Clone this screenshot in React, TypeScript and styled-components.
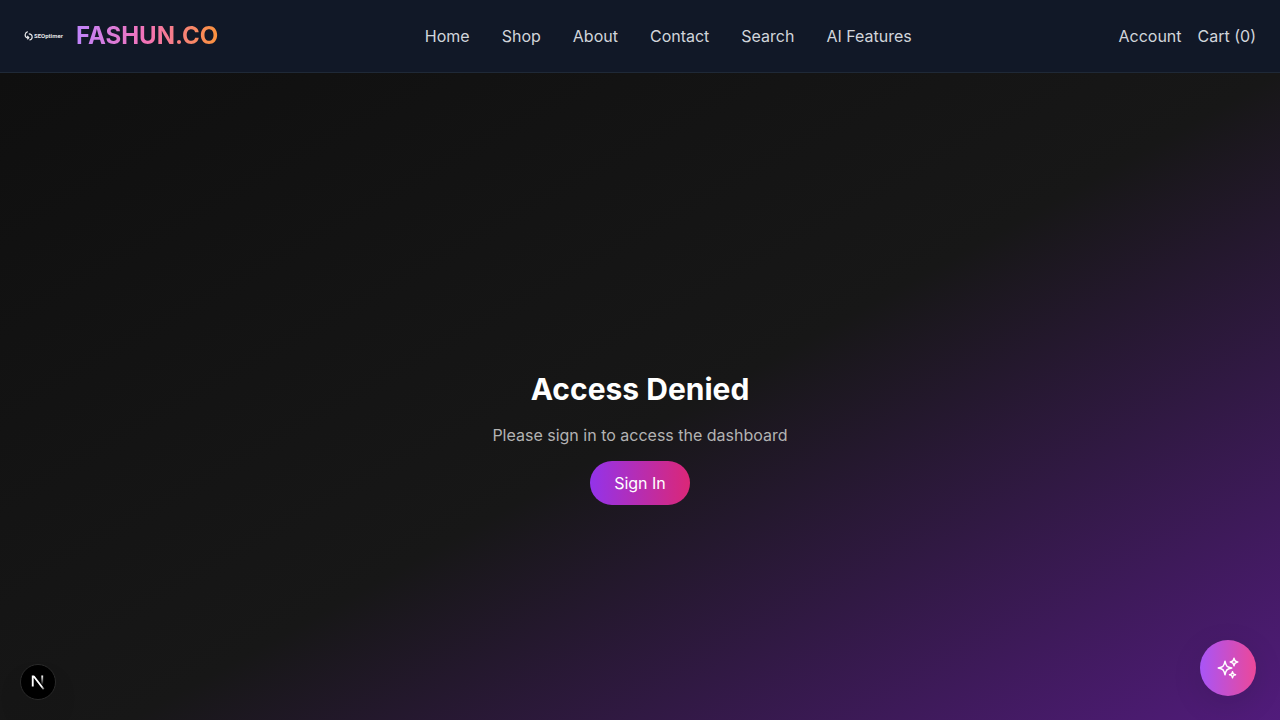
import React from "react";
import styled, { createGlobalStyle } from "styled-components";
import { HiOutlineSparkles } from "react-icons/hi2";

const GlobalStyle = createGlobalStyle`
  *, *::before, *::after { box-sizing: border-box; }
  body {
    margin: 0;
    background: #171717;
    color: #ffffff;
    font-family: Inter, "Liberation Sans", sans-serif;
    font-size: 16px;
    line-height: 24px;
  }
  a { color: inherit; text-decoration: none; }
`;

const Header = styled.header`
  display: flex;
  align-items: center;
  justify-content: space-between;
  padding: 16px 24px;
  background: #111827;
  border-bottom: 1px solid #1f2937;
`;

const Brand = styled.a`
  display: flex;
  align-items: center;
  gap: 12px;
`;

const BrandLogo = styled.svg`
  display: block;
  width: 40px;
  height: 40px;
`;

const BrandName = styled.span`
  font-size: 24px;
  line-height: 32px;
  font-weight: 700;
  color: transparent;
  background: linear-gradient(to right, #c084fc, #f472b6, #fb923c);
  -webkit-background-clip: text;
  background-clip: text;
`;

const LinkRow = styled.nav<{ $gap: number }>`
  display: flex;
  align-items: center;
  gap: ${({ $gap }) => $gap}px;
`;

const NavLink = styled.a`
  color: #d1d5db;
  &:hover { color: #ffffff; }
`;

const Main = styled.main`
  display: flex;
  align-items: center;
  justify-content: center;
  min-height: 100vh;
  background: linear-gradient(to bottom right, #0f0f0f, #171717, #581c87);
`;

const Notice = styled.section`
  text-align: center;
`;

const Title = styled.h1`
  margin: 0 0 16px;
  font-size: 30px;
  line-height: 36px;
  font-weight: 700;
`;

const Message = styled.p`
  margin: 0 0 24px;
  color: #b3b3b3;
`;

const SignInLink = styled.a`
  padding: 12px 24px;
  border-radius: 9999px;
  background: linear-gradient(to right, #9333ea, #db2777);
`;

const AssistantButton = styled.button`
  position: fixed;
  right: 24px;
  bottom: 24px;
  display: flex;
  align-items: center;
  justify-content: center;
  width: 56px;
  height: 56px;
  padding: 0;
  border: 0;
  border-radius: 50%;
  color: #ffffff;
  background: linear-gradient(to right, #a855f7, #ec4899);
  box-shadow: 0 8px 32px rgba(0, 0, 0, 0.1);
  cursor: pointer;
`;

const DevButton = styled.button`
  position: fixed;
  left: 20px;
  bottom: 20px;
  display: flex;
  align-items: center;
  justify-content: center;
  width: 36px;
  height: 36px;
  padding: 0;
  border: 1px solid #2a2a2a;
  border-radius: 50%;
  background: #000000;
  box-shadow: 0 16px 32px -8px rgba(0, 0, 0, 0.24);
  cursor: pointer;
`;

const navItems = ["Home", "Shop", "About", "Contact", "Search", "AI Features"];

function Logo() {
  return (
    <BrandLogo viewBox="0 0 40 40" role="img" aria-label="SEOptimer">
      <g fill="none" stroke="#ffffff" strokeOpacity="0.9" strokeWidth="1.2">
        <path d="M3.7 15.6 A4 4 0 0 0 1.1 19 A3 3 0 0 0 4.2 21.8" />
        <path d="M3.2 19.8 L4.8 21.6 L3.4 23.4" />
        <path d="M4.8 17.8 A3.4 3.4 0 0 1 8.2 21 A3.2 3.2 0 0 1 5.4 24" />
      </g>
      <text
        x="10"
        y="22"
        fill="#ffffff"
        fillOpacity="0.9"
        fontFamily="Roboto, sans-serif"
        fontSize="6"
        fontWeight="700"
      >
        SEOptimer
      </text>
    </BrandLogo>
  );
}

function NextMark() {
  return (
    <svg width="18" height="18" viewBox="0 0 18 18" fill="none" aria-hidden="true">
      <defs>
        <linearGradient id="diagonal" x1="11" y1="12.5" x2="14.8" y2="17.2" gradientUnits="userSpaceOnUse">
          <stop stopColor="#fff" />
          <stop offset="1" stopColor="#fff" stopOpacity="0" />
        </linearGradient>
        <linearGradient id="stem" x1="11.82" y1="1.4" x2="11.79" y2="11" gradientUnits="userSpaceOnUse">
          <stop stopColor="#fff" />
          <stop offset="1" stopColor="#fff" stopOpacity="0" />
        </linearGradient>
        <clipPath id="corner">
          <path d="M0 1.5H18V18H0Z" />
        </clipPath>
      </defs>
      <g transform="translate(1.4 1)" strokeWidth="1.86">
        <path d="M13.3 15.2L2.34 1V12.6" stroke="url(#diagonal)" clipPath="url(#corner)" />
        <path d="M11.825 1.5V13.1" stroke="url(#stem)" />
      </g>
    </svg>
  );
}

export default function App() {
  return (
    <>
      <GlobalStyle />
      <Header>
        <Brand href="#home">
          <Logo />
          <BrandName>FASHUN.CO</BrandName>
        </Brand>
        <LinkRow $gap={32} aria-label="Main">
          {navItems.map((item) => (
            <NavLink key={item} href={`#${item.toLowerCase().replace(" ", "-")}`}>
              {item}
            </NavLink>
          ))}
        </LinkRow>
        <LinkRow $gap={16} aria-label="Account">
          <NavLink href="#account">Account</NavLink>
          <NavLink href="#cart">Cart (0)</NavLink>
        </LinkRow>
      </Header>
      <Main>
        <Notice>
          <Title>Access Denied</Title>
          <Message>Please sign in to access the dashboard</Message>
          <SignInLink href="#signin">Sign In</SignInLink>
        </Notice>
      </Main>
      <AssistantButton type="button" aria-label="Open AI assistant">
        <HiOutlineSparkles size={24} />
      </AssistantButton>
      <DevButton type="button" aria-label="Open developer tools">
        <NextMark />
      </DevButton>
    </>
  );
}
